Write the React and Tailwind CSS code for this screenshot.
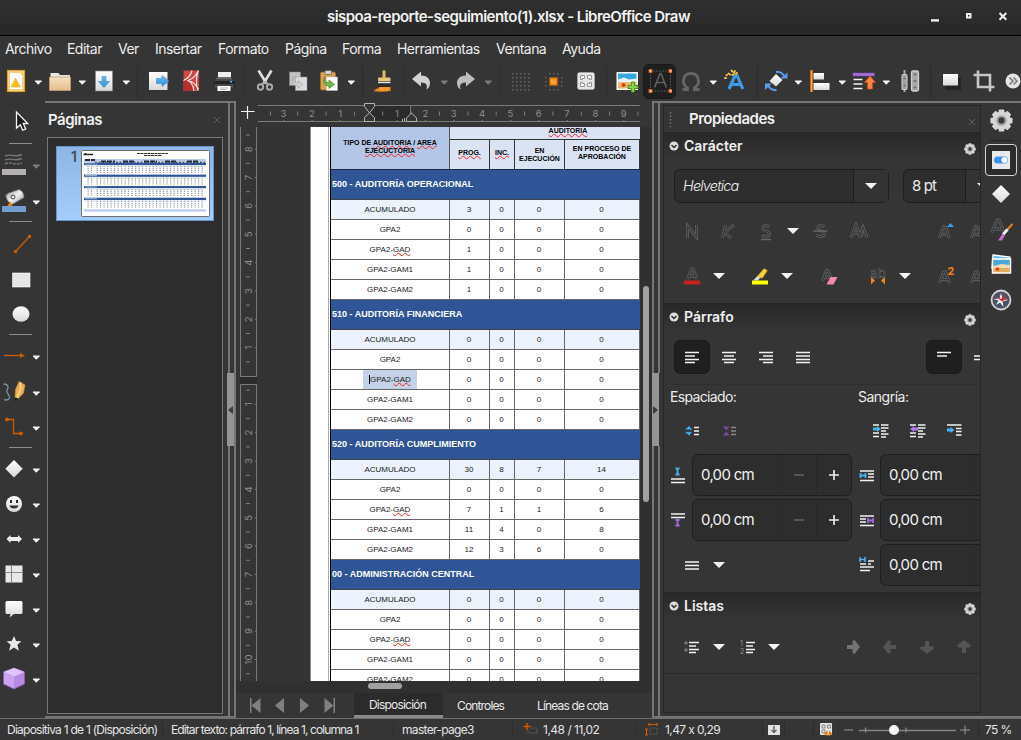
import React from "react";

/* ---------- shared pieces ---------- */

const Svg = ({ children, className = "" }) => (
  <svg width="24" height="24" viewBox="0 0 24 24" fill="none" className={"shrink-0 " + className}>
    {children}
  </svg>
);

const Caret = ({ dim = false, className = "" }) => (
  <svg width="20" height="10" viewBox="0 0 20 10" className={"shrink-0 " + className}>
    <path d="M7 3.5h6.6v.8L10.5 7.4h-.6L7 4.3z" fill={dim ? "#7c7c7c" : "#fafafa"} />
  </svg>
);

const BigCaret = ({ className = "" }) => (
  <svg width="20" height="12" viewBox="0 0 20 12" className={"shrink-0 " + className}>
    <path d="M4 3h12l-6 6z" fill="#f4f4f2" />
  </svg>
);

const Sep = ({ className = "" }) => <div className={"h-8 w-px shrink-0 bg-[#2c2c2c] " + className} />;

const Defs = () => (
  <svg width="0" height="0" className="absolute">
    <defs>
      <linearGradient id="paper" x1="0" y1="0" x2="0" y2="1">
        <stop offset="0" stopColor="#ffffff" />
        <stop offset="1" stopColor="#d8d8d8" />
      </linearGradient>
      <linearGradient id="blue" x1="0" y1="0" x2="0" y2="1">
        <stop offset="0" stopColor="#6fc0f2" />
        <stop offset="1" stopColor="#2a8fdc" />
      </linearGradient>
      <linearGradient id="folder" x1="0" y1="0" x2="0" y2="1">
        <stop offset="0" stopColor="#f6e2c4" />
        <stop offset="1" stopColor="#e3bd8b" />
      </linearGradient>
      <linearGradient id="metal" x1="0" y1="0" x2="1" y2="1">
        <stop offset="0" stopColor="#8f8f93" />
        <stop offset="0.5" stopColor="#f2f2f4" />
        <stop offset="1" stopColor="#8a8a8e" />
      </linearGradient>
    </defs>
  </svg>
);

/* ---------- top ---------- */

const TitleBar = () => (
  <div className="flex h-9 shrink-0 items-center border-b border-black bg-gradient-to-b from-[#303030] to-[#272727]">
    <div className="w-[326px]" />
    <div className="w-[365px] whitespace-nowrap text-center text-[15px] font-semibold tracking-[-0.56px] text-[#f2f2f2]">
      sispoa-reporte-seguimiento(1).xlsx - LibreOffice Draw
    </div>
    <svg width="96" height="24" viewBox="0 0 96 24" className="ml-[230px]">
      <path d="M10 13.2h8v2.400h-8z" fill="#f0f0f0" />
      <path d="M46 8h3.500v3.500h-3.500z" stroke="#f0f0f0" strokeWidth="2" fill="none" />
      <path d="M78.500 7l6.800 6.800M85.300 7L78.500 13.800" stroke="#f0f0f0" strokeWidth="2" />
    </svg>
  </div>
);

const MenuBar = () => (
  <div className="flex h-[26px] shrink-0 items-center whitespace-nowrap border-b border-[#313131] bg-[#353535] pl-[5px] text-[14px] tracking-[-0.55px] text-[#ededed]">
    <div className="w-[62px]">Archivo</div>
    <div className="w-[51px]">Editar</div>
    <div className="w-[37px]">Ver</div>
    <div className="w-[63px]">Insertar</div>
    <div className="w-[67px]">Formato</div>
    <div className="w-[57px]">Página</div>
    <div className="w-[55px]">Forma</div>
    <div className="w-[99px]">Herramientas</div>
    <div className="w-[66px]">Ventana</div>
    <div>Ayuda</div>
  </div>
);

const dots = [];
for (let r = 0; r < 5; r++) for (let c = 0; c < 5; c++) dots.push([c, r]);

const TCaret = ({ dim, className = "" }) => <Caret dim={dim} className={"mt-[2px] " + className} />;

const ToolBar = () => (
  <div className="flex h-[39px] shrink-0 items-center overflow-hidden bg-[#353535] pb-px">
    <Svg className="ml-1">
      <rect x="3.700" y="1.700" width="16.600" height="20.600" fill="#fff" stroke="#dfa32c" strokeWidth="1.600" />
      <rect x="5.500" y="3.500" width="13" height="17" fill="#fff" stroke="#f3cf76" />
      <path d="M11.500 9l5 9H7z" fill="#f8c21c" stroke="#e0a010" strokeWidth=".5" />
      <path d="M14.500 2.500h5v6z" fill="#ffdb6e" />
    </Svg>
    <TCaret className="mr-px" />
    <Svg>
      <path d="M1.500 4h8l1.500 2H21v4H1.500z" fill="#e8e8e8" />
      <rect x="0.500" y="8" width="21" height="13.500" rx=".5" fill="url(#folder)" stroke="#c9a06e" strokeWidth=".8" />
    </Svg>
    <TCaret className="-ml-px" />
    <Svg>
      <rect x="3.500" y="2" width="17" height="20" fill="url(#paper)" stroke="#888" strokeWidth=".6" />
      <path d="M10 7.500h4v5h3.500L12 18.500 6.500 12.500H10z" fill="url(#blue)" stroke="#2e7fbd" strokeWidth=".5" />
    </Svg>
    <TCaret className="mr-px" />
    <Sep />
    <Svg className="ml-[9px]">
      <rect x="2" y="3" width="18.500" height="18" fill="url(#paper)" />
      <path d="M9.500 9.500h5.500V6.500l7 5.500-7 5.500v-3H9.500z" fill="url(#blue)" stroke="#2e7fbd" strokeWidth=".5" />
    </Svg>
    <Svg className="ml-2">
      <rect x="4.500" y="1.500" width="15.500" height="20.500" fill="#cf4540" />
      <path d="M4.500 12L11 12 14 22H4.500z" fill="#b03032" />
      <path d="M13 1.500c-1 4-3.500 8-8.500 10M8 11.500c3.500.5 6 4 7 10.500M19.500 1.500C17 6 15.500 9 9 11.500M19 2.500c-2 6-2 13 0 19M10 12c3 .5 7 4 9.500 8" stroke="#f6e4e2" strokeWidth="1.200" />
    </Svg>
    <Svg className="ml-[9px]">
      <rect x="6" y="3" width="13" height="8" fill="#efefef" />
      <path d="M2 11.500l2.500-3h15.500l2.500 3v8.500H2z" fill="#484848" stroke="#171717" strokeWidth=".6" />
      <path d="M2.500 12h19.500v3H2.500z" fill="#222" />
      <path d="M4.500 9h15" stroke="#8a8a8a" />
      <rect x="18" y="12" width="2" height="1.500" fill="#35c8ff" />
      <rect x="5.500" y="17" width="13" height="5" fill="#fff" />
      <path d="M8 19h8M8 20.500h6" stroke="#aaa" strokeWidth=".8" />
    </Svg>
    <Sep className="ml-2" />
    <Svg className="ml-2">
      <path d="M5.500 1.500l8 13M18.500 1.500l-8 13" stroke="#dedede" strokeWidth="2.600" />
      <circle cx="7.500" cy="18" r="2.700" stroke="#a9a9a9" strokeWidth="1.900" />
      <circle cx="16.500" cy="18" r="2.700" stroke="#a9a9a9" strokeWidth="1.900" />
      <path d="M9 15.500l3-2.500 3 2.500" stroke="#a9a9a9" strokeWidth="1.800" />
    </Svg>
    <Svg className="ml-[9px]">
      <rect x="3.500" y="3" width="11" height="13.500" fill="#c2c2c2" stroke="#888" strokeWidth=".5" />
      <rect x="9.500" y="8" width="11.500" height="13.500" fill="#dcdcdc" stroke="#999" strokeWidth=".5" />
      <path d="M8 7c-2 3 0 7 4 7v-2.500l5 4-5 4V17c-5 0-7.500-5-4-10z" fill="#cfcfcf" stroke="#969696" strokeWidth=".5" />
    </Svg>
    <Svg className="ml-[7px]">
      <rect x="3.500" y="3" width="15" height="18" rx="1.500" fill="#dba24e" stroke="#a36e25" strokeWidth=".7" />
      <rect x="8" y="1.500" width="6.500" height="4" rx="1" fill="#d8d8d8" stroke="#555" strokeWidth=".7" />
      <rect x="9.500" y="8" width="11" height="13.500" fill="#fff" stroke="#bbb" strokeWidth=".5" />
      <path d="M8 7.500c-1 3 0 6 4 6V11l5.500 4.500L12 19.500V17c-5 0-7-5-4-9.500z" fill="#72b848" stroke="#3f8425" strokeWidth=".7" />
    </Svg>
    <TCaret />
    <Sep className="ml-px" />
    <Svg className="ml-2">
      <path d="M11.500 2.500a1.500 1.500 0 0 1 3 0V9h-3z" fill="#e2b86e" stroke="#9a7230" strokeWidth=".5" />
      <rect x="7" y="8.500" width="12.500" height="4" rx="1" fill="#e8c682" />
      <rect x="7" y="12.500" width="12.500" height="5.500" fill="#2c2c2c" />
      <path d="M7 13.500h12.500" stroke="#e8e8e8" strokeWidth="1.400" />
      <path d="M8 18h11.500v4c-6 1-12 .5-17 .5l3-2H2l5-1z" fill="#f08a1c" />
      <path d="M10 18.500v3M13 18.500v3M16 18.500v3" stroke="#ffc266" />
    </Svg>
    <Sep className="ml-2" />
    <Svg className="ml-[5px]">
      <path d="M3 10l9-7.500v4c7 0 9 4.500 9 7.500 0 3-1.500 5.500-3.500 6.500 1-4 .5-7-5.500-7v4z" fill="#d2d2d2" />
    </Svg>
    <TCaret dim className="ml-px" />
    <Svg>
      <path d="M21 10l-9-7.500v4c-7 0-9 4.500-9 7.500 0 3 1.500 5.500 3.500 6.500-1-4-.5-7 5.500-7v4z" fill="#bdbdbd" />
    </Svg>
    <TCaret dim />
    <Sep className="ml-px" />
    <Svg className="ml-2">
      {dots.map(([c, r]) => (
        <rect key={c + "-" + r} x={4 + c * 4} y={4 + r * 4} width="1.500" height="1.500" fill="#666" />
      ))}
    </Svg>
    <Svg className="ml-[9px]">
      {dots.map(([c, r]) =>
        !((c === 0 || c === 4) && (r === 0 || r === 4)) ? (
          <rect key={c + "-" + r} x={4 + c * 4} y={4 + r * 4} width="1.500" height="1.500" fill="#666" />
        ) : null
      )}
      <rect x="7.500" y="7.500" width="9.500" height="9.500" fill="#353535" />
      <rect x="9" y="9" width="7" height="7" fill="#fba033" stroke="#e87000" strokeWidth="1.200" />
    </Svg>
    <Svg className="ml-[9px]">
      <rect x="3.500" y="3.500" width="17" height="17" rx="2" fill="#e6e6e6" stroke="#bbb" strokeWidth=".5" />
      <path d="M6.500 10.500v-4h4v3h-2v1zM17.500 10.500v-4h-4v3h2v1zM6.500 13.500v4h4v-3h-2v-1zM17.500 13.500v4h-4v-3h2v-1z" fill="#fff" stroke="#8a8a8a" strokeWidth=".9" />
    </Svg>
    <Sep className="ml-2" />
    <Svg className="ml-2">
      <rect x="1.500" y="3" width="21.500" height="18" fill="#fff" />
      <rect x="3" y="4.500" width="18.500" height="8" fill="#38a5e0" />
      <path d="M3 10.500l6-2 5 2 7.500-1v4H3z" fill="#e5f5fb" />
      <path d="M3 13h18.500v6.500H3z" fill="#e9b96b" />
      <path d="M8.500 14v4M6.500 16h4" stroke="#db3a12" strokeWidth="2" />
      <path d="M16.500 13h3v3.500H23v3h-3.500V23h-3v-3.500H13v-3h3.500z" fill="#8ad052" stroke="#4a9417" />
    </Svg>
    <div className="ml-1 flex h-[35px] w-[33px] shrink-0 items-center justify-center rounded-md border border-[#191919] bg-[#1f1f1f]">
      <Svg>
        <rect x="2.500" y="2" width="20" height="20" stroke="#5d5d5d" strokeDasharray="1.500 1.500" />
        <path d="M6.500 18.500L12 4.500h1l5.500 14M8.500 13.500h8" stroke="#606060" strokeWidth="1.700" />
        {[[1, 0.5], [21, 0.5], [1, 20.5], [21, 20.5]].map(([x, y]) => (
          <rect key={x + "-" + y} x={x} y={y} width="3" height="3" fill="#f9b48c" stroke="#e0601c" strokeWidth=".8" />
        ))}
      </Svg>
    </div>
    <Svg className="ml-[3px]">
      <path d="M3.500 20.500h5v-1.500C5 16.500 4 14 4.500 11 5 6.500 8 4.500 12 4.500s7 2 7.500 6.500c.5 3-.5 5.500-4 8v1.500h5" stroke="#666" strokeWidth="2.800" />
    </Svg>
    <TCaret />
    <Svg>
      <path d="M6 20L11.800 7h2.500l5.500 13M9 15.500h8" stroke="#3e9ae4" strokeWidth="3.200" />
      <path d="M8.500 1.500l1 1M12 2l-1 2M5.500 4.500l1.500 1M2 9l1 0M9 6l1.500 -.5M3.500 6l.5 0M14 4l-1 1" stroke="#f7c948" strokeWidth="1.800" strokeLinecap="round" />
    </Svg>
    <Sep className="ml-[10px]" />
    <Svg className="ml-1.5">
      <path d="M12 5l6.500 6-6.500 6.500L5.500 12z" fill="url(#paper)" />
      <path d="M12 3c4.500-.5 8 2 8.500 6" stroke="#5a9bea" strokeWidth="2.200" />
      <path d="M16.500 9.500h7V3.500z" fill="#5a9bea" />
      <path d="M12.500 21c-4.500 .5-8-2-8.500-6" stroke="#5a9bea" strokeWidth="2.200" />
      <path d="M8 14.500H1v6.500z" fill="#5a9bea" />
    </Svg>
    <TCaret />
    <Svg>
      <path d="M3.500 1v22" stroke="#ee7a0b" strokeWidth="2.600" />
      <path d="M3.500 2v20" stroke="#f9b266" strokeWidth=".8" />
      <rect x="5.500" y="4" width="10.500" height="6.500" fill="url(#paper)" />
      <rect x="5.500" y="14" width="16" height="7" fill="url(#paper)" />
    </Svg>
    <TCaret />
    <Svg>
      <rect x="1" y="4" width="21.500" height="3" fill="#a774dc" stroke="#7b42b8" strokeWidth=".6" />
      <path d="M1.500 10.500h9M1.500 15h9M1.500 19.500h9" stroke="#f2f2f2" strokeWidth="1.500" />
      <path d="M15.500 20v-6.500h-3L18 7l5.500 6.500h-3V20z" fill="#fb8440" stroke="#d4500e" strokeWidth=".7" />
    </Svg>
    <TCaret />
    <Svg className="ml-0.5">
      <path d="M6.500 1v22" stroke="#a8a8a8" strokeWidth="2" />
      <rect x="4" y="5.500" width="5" height="15" rx="1" fill="#a0a0a0" stroke="#c8c8c8" strokeWidth="1.100" />
      <rect x="13.500" y="2" width="7" height="20" rx="1.500" fill="#a8a8a8" stroke="#cecece" strokeWidth="1.300" />
      <path d="M5.500 9.500h2M5.500 16.500h2M15.500 5.500h3M15.500 12h3M15.500 18.500h3" stroke="#666" strokeWidth="1.500" />
    </Svg>
    <Sep className="ml-2" />
    <Svg className="ml-2">
      <rect x="6" y="8.500" width="16" height="12.500" fill="#242424" />
      <rect x="4" y="5" width="15" height="11.500" fill="url(#paper)" />
    </Svg>
    <Svg className="ml-[9px]">
      <path d="M6 1.500V18h16.500M1.500 6H18v16.500" stroke="#c6c6c6" strokeWidth="2.600" />
    </Svg>
    <Svg className="ml-[5px]">
      <circle cx="12" cy="12" r="7.500" fill="#e4e4e4" />
      <path d="M8.500 8.500l3.500 3.500-3.500 3.500M12.500 8.500l3.500 3.500-3.500 3.500" stroke="#777" strokeWidth="1.500" />
    </Svg>
  </div>
);

/* ---------- left tools ---------- */

const Tool = ({ h, caret, dim, children }) => (
  <div className={"flex shrink-0 items-center " + h + (caret ? " pl-[2px]" : " pl-[9px]")}>
    {children}
    {caret && <Caret dim={dim} className="mt-[2px]" />}
  </div>
);
const ToolSep = () => <div className="my-[3px] ml-[9px] h-px w-[23px] shrink-0 bg-[#8c8c8c]" />;

const LeftTools = () => (
  <div className="flex w-[45px] shrink-0 flex-col">
    <Tool h="h-[39px]">
      <Svg><path d="M7.500 3v16l3.800-3.300 2.400 5.500 3-1.200-2.400-5.500h4.500z" fill="#1c1c1c" stroke="#f6f6f6" strokeWidth="1.300" /></Svg>
    </Tool>
    <ToolSep />
    <Tool h="h-9" caret dim>
      <Svg>
        <path d="M3 3c6-3 9 2 17-1.500M3 7c6-3 9 2 17-1.500" stroke="#787878" strokeWidth="1.400" />
        <path d="M3 11c6-3 9 2 17-1" stroke="#787878" strokeWidth="1.400" strokeDasharray="3 1" />
        <rect x="0" y="16" width="24" height="6" fill="#b5b1b2" />
      </Svg>
    </Tool>
    <Tool h="h-[35px]" caret>
      <Svg>
        <path d="M4 5L17 .5c3 1 5 4 5 8L10 15.500c-4-2-6.500-6.500-6-10.500z" fill="url(#metal)" stroke="#777" strokeWidth=".7" />
        <path d="M9 2C5 0 3.500 2 5 6" stroke="#2b2b2b" />
        <circle cx="11" cy="8" r="2" stroke="#444" />
        <path d="M8 12l2.500 5h-5z" fill="#ef7b12" />
        <rect x="0" y="17" width="24" height="6" fill="#729fcf" />
      </Svg>
    </Tool>
    <ToolSep />
    <Tool h="h-[37px]">
      <Svg>
        <path d="M6.500 19.500L20.500 4.500" stroke="#ce5c00" strokeWidth="1.300" />
        <path d="M5 18h3v3H5zM19 3h3v3h-3z" fill="#ce5c00" />
      </Svg>
    </Tool>
    <Tool h="h-[35px]"><Svg><rect x="3.500" y="5" width="17.500" height="14" fill="#e6e6e4" stroke="#fff" strokeWidth=".6" /></Svg></Tool>
    <Tool h="h-[34px]"><Svg><ellipse cx="12" cy="12" rx="8.500" ry="7.700" fill="url(#paper)" /></Svg></Tool>
    <ToolSep />
    <Tool h="h-9" caret>
      <Svg><path d="M2 11.500h17" stroke="#ce5c00" strokeWidth="1.300" /><path d="M18 9l5 2.500-5 2.500z" fill="#ce5c00" /></Svg>
    </Tool>
    <Tool h="h-[35px]" caret>
      <Svg>
        <path d="M1.500 4c5 0 5.500 4 3.500 6s3.500 5 2.500 8c-1 2-4 2.500-5.500 1.500" stroke="#7f92a5" strokeWidth="1.300" />
        <path d="M17 1.500l6 3.500-1.500 8-5.500 6-3-1.500 .5-8z" fill="#f5ad4d" stroke="#d88a28" strokeWidth=".6" />
        <path d="M18.500 2.500l0 7-3.500 8" stroke="#ffd795" strokeWidth="1.800" />
        <path d="M13 17.500l-.5 4 4-3z" fill="#222" />
      </Svg>
    </Tool>
    <Tool h="h-[35px]" caret>
      <Svg>
        <path d="M5 4.500h6.500V18.500H19" stroke="#ce5c00" strokeWidth="1.300" />
        <circle cx="5" cy="4.500" r="2" fill="#ce5c00" /><circle cx="19" cy="18.500" r="2" fill="#ce5c00" />
      </Svg>
    </Tool>
    <ToolSep />
    <Tool h="h-[35px]" caret><Svg><path d="M12 3l8.700 8.700-8.700 8.700-8.700-8.700z" fill="url(#paper)" /></Svg></Tool>
    <Tool h="h-[35px]" caret>
      <Svg>
        <circle cx="12" cy="12" r="8" fill="url(#paper)" />
        <rect x="8" y="8" width="2" height="3" fill="#333" /><rect x="14" y="8" width="2" height="3" fill="#333" />
        <path d="M7.500 13.500h9c-.5 4-8.500 4-9 0z" fill="#333" />
      </Svg>
    </Tool>
    <Tool h="h-[35px]" caret><Svg><path d="M4.500 12l4-4v2h7.500V8l4 4-4 4v-2h-7.500v2z" fill="#f0f0f0" /></Svg></Tool>
    <Tool h="h-[35px]" caret>
      <Svg><rect x="3.500" y="3.500" width="17" height="17" fill="#e9e9e7" /><path d="M9.500 3.500v17M3.500 10.500h17" stroke="#888" strokeWidth="1.100" /></Svg>
    </Tool>
    <Tool h="h-[35px]" caret><Svg><path d="M5 4h14q1.500 0 1.500 1.500v10Q20.500 17 19 17h-7l-4.500 3.500 1-3.500H5q-1.500 0-1.500-1.500v-10Q3.500 4 5 4z" fill="url(#paper)" /></Svg></Tool>
    <Tool h="h-[35px]" caret><Svg><path d="M12 4l2.200 5 5.200.3-4 3.500 1.500 6L12 15.500 7.100 18.800l1.500-6-4-3.500 5.200-.3z" fill="#e8e8e8" /></Svg></Tool>
    <Tool h="h-[35px]" caret>
      <Svg>
        <path d="M12 1l10.500 4v12L12 22 1.500 17V5z" fill="#b98ae4" stroke="#8c5bb5" />
        <path d="M1.500 5L12 1l10.500 4L12 9.500z" fill="#dfc5f7" />
        <path d="M2 5.500l10 4v12L2 16.500z" fill="#c9a2f0" />
      </Svg>
    </Tool>
  </div>
);

/* ---------- page thumbnails ---------- */

const Thumb = () => (
  <svg width="129" height="67" viewBox="0 0 129 67" className="shrink-0">
    <rect x=".5" y=".5" width="128" height="66" rx="1" fill="#fff" stroke="#6d6d6d" />
    <path d="M2.500 4.500h2v-1.500M5 4.500h7" stroke="#222" strokeWidth="1.500" fill="none" />
    <path d="M56 3.500h31M63 5.500h18" stroke="#333" strokeWidth="1" strokeDasharray="3 .5" />
    <rect x="3" y="9" width="122" height="4" fill="#b9cbea" />
    <path d="M4 10h10M20 11.500h14M42 11.500h12M63 11.500h13M84 11.500h12M106 11.500h12" stroke="#252b36" strokeWidth="2" strokeDasharray="5 1" />
    <path d="M14 12.300h110" stroke="#30353f" strokeWidth="1" strokeDasharray="2 1.500" />
    {[14, 25.6, 37, 48.7].map((y) => (
      <g key={y}>
        <rect x="3" y={y - 1} width="122" height="2.300" fill="#2f5597" />
        <path d={"M4 " + y + "h12"} stroke="#b8cbe8" strokeWidth=".8" />
        <rect x="3" y={y + 1.3} width="122" height="1.500" fill="#e5edf9" />
        {[2.7, 4.600, 6.500, 8.400].map((d) => (
          <path key={d} d={"M6.500 " + (y + d) + "h5M15.500 " + (y + d) + "h107"} stroke="#8f949c" strokeWidth="1" strokeDasharray="1.200 2.300" />
        ))}
      </g>
    ))}
    <rect x="3" y="59.500" width="122" height="2" fill="#b4c6e7" />
  </svg>
);

const Splitter = ({ arrow, side }) => (
  <div className="flex w-[9px] shrink-0 flex-col">
    <div className={"h-[270px] border-x-2 border-[#757575] " + (side === "left" ? "ml-px" : "mr-px")} />
    <div className={"flex h-[73px] " + (side === "left" ? "border-r-2 border-[#757575]" : "")}>
      <div className="flex w-[7px] items-center justify-center bg-[#949492]">
        <svg width="5" height="8" viewBox="0 0 5 8"><path d={arrow} fill="#3a3a3a" /></svg>
      </div>
    </div>
    <div className={"flex-1 border-x-2 border-[#757575] " + (side === "left" ? "ml-px" : "mr-px")} />
  </div>
);

const PagesPanel = () => (
  <div className="flex w-[191px] shrink-0 flex-col border-y-2 border-[#757575]">
    <div className="flex min-h-0 flex-1">
      <div className="flex w-[182px] shrink-0 flex-col pl-0.5 pr-[4px]">
        <div className="flex h-[34px] shrink-0 items-center justify-between pl-px pr-[2px]">
          <span className="text-[15px] font-semibold tracking-[-0.5px] text-[#efefef]">Páginas</span>
          <svg width="8" height="8" viewBox="0 0 8 8"><path d="M1 1l6 6M7 1L1 7" stroke="#606060" /></svg>
        </div>
        <div className="mb-0.5 flex-1 border border-[#777] bg-[#2d2d2d] pl-2 pt-2">
          <div className="flex h-[75px] w-[158px] border border-[#6295d2] bg-gradient-to-b from-[#8db6e5] to-[#a4cdfb]">
            <div className="w-[24px] pr-[4px] text-right text-[14px] leading-5 font-semibold text-[#454c55]">1</div>
            <div className="pt-[3px]"><Thumb /></div>
          </div>
        </div>
      </div>
      <Splitter side="left" arrow="M5 0v8L0 4z" />
    </div>
  </div>
);

/* ---------- rulers ---------- */

const HRuler = () => {
  const z = 111.3;
  const marks = [];
  for (let i = -3; i <= 9; i++) marks.push(i);
  return (
    <svg width="382" height="26" viewBox="0 0 382 26" className="shrink-0">
      <rect x="111" y="5" width="41" height="16" fill="#2b2b2b" />
      <path d="M0 4.500H106M117 4.500H382M0 20.500H382M152.500 5v10" stroke="#7a7a7a" />
      {marks.map((i) => (
        <g key={i}>
          {i !== 0 && (
            <text x={z + i * 28.35 - 0.7} y="15.500" textAnchor="middle" fontSize="9.500" fill="#8f8f8f">{Math.abs(i)}</text>
          )}
          <path d={`M${(z + i * 28.35 - 0.5).toFixed(1)} 19v2M${(z + i * 28.35 + 13.5).toFixed(1)} 10.500v4`} stroke="#808080" />
        </g>
      ))}
      <path d="M12.500 10.500v4" stroke="#808080" />
      <path d="M106.500 2.500h10v3l-5 6.500-5-6.500zM106.500 20.500v-4l5-4.500 5 4.500v4z" fill="#353535" stroke="#b5b5b5" />
      <path d="M148.500 20.500v-3.500l5-5 5 5v3.500zM144.500 18v2.500M146.500 17v3.500" fill="#353535" stroke="#b5b5b5" />
    </svg>
  );
};

const VRuler = () => {
  const marks = [];
  for (let i = -8; i <= 10; i++) if (i !== 0) marks.push(i);
  const half = [];
  for (let i = -9; i <= 10; i++) half.push(i);
  const z = 249;
  return (
    <svg width="22" height="554" viewBox="0 0 22 554" className="shrink-0">
      <path d="M4.500 0V249.500H20.500V0M4.500 554V257.500H20.500V554" stroke="#7a7a7a" fill="none" />
      <rect x="4" y="250" width="17" height="7" fill="#2b2b2b" />
      {marks.map((i) => (
        <g key={i}>
          <text
            transform={`translate(15.5 ${z + i * 28.35}) rotate(-90)`}
            textAnchor="middle" fontSize="9.500" fill="#8f8f8f"
          >{Math.abs(i)}</text>
          <path d={`M19 ${(z + i * 28.35).toFixed(1)}h2`} stroke="#808080" />
        </g>
      ))}
      {half.map((i) => (
        <path key={i} d={`M10 ${(z + i * 28.35 + 14.2).toFixed(1)}h4`} stroke="#808080" />
      ))}
    </svg>
  );
};

/* ---------- document ---------- */

const sections = [
  { title: "500 - AUDITORÍA OPERACIONAL", rows: [[3, 0, 0, 0], [0, 0, 0, 0], [1, 0, 0, 0], [1, 0, 0, 0], [1, 0, 0, 0]] },
  { title: "510 - AUDITORÍA FINANCIERA", rows: [[0, 0, 0, 0], [0, 0, 0, 0], [0, 0, 0, 0], [0, 0, 0, 0], [0, 0, 0, 0]], selected: 2 },
  { title: "520 - AUDITORÍA CUMPLIMIENTO", rows: [[30, 8, 7, 14], [0, 0, 0, 0], [7, 1, 1, 6], [11, 4, 0, 8], [12, 3, 6, 0]] },
  { title: "00 - ADMINISTRACIÓN CENTRAL", rows: [[0, 0, 0, 0], [0, 0, 0, 0], [0, 0, 0, 0], [0, 0, 0, 0], [0, 0, 0, 0]] },
];
const names = ["ACUMULADO", "GPA2", "GPA2-GAD", "GPA2-GAM1", "GPA2-GAM2"];
const wavy = "underline decoration-wavy decoration-[#ff2020] decoration-[1px] underline-offset-[0px] [text-decoration-skip-ink:none]";
const cols = "grid grid-cols-[119px_40px_25px_50px_75px]";

const Name = ({ text }) =>
  text === "GPA2-GAD" ? <span>GPA2-<span className={wavy}>GAD</span></span> : <span>{text}</span>;

const DocTable = () => (
  <div className="w-[310px] shrink-0 border-l border-black [font-family:'Liberation_Sans',Arial,sans-serif] text-[8px] text-[#1a1a1a]">
    <div className="grid h-[43px] grid-cols-[119px_190px] border-b border-[#1c2c4c] text-[7px] font-bold leading-[8px] text-black">
      <div className="flex items-center justify-center border-r border-[#555] bg-[#b4c6e7] pb-[3px] text-center">
        <div className="whitespace-nowrap">TIPO DE <span className={wavy}>AUDITORIA</span> / <span className={wavy}>AREA</span><br /><span className={wavy}>EJECUCTORIA</span></div>
      </div>
      <div className="flex flex-col bg-[#dae3f3]">
        <div className="h-[13px] border-b border-[#333] pl-[46px] text-center"><span className={wavy}>AUDITORIA</span></div>
        <div className="grid flex-1 grid-cols-[40px_25px_50px_75px] text-center">
          <div className="flex items-center justify-center border-r border-[#333] pb-[3px]"><span className={wavy}>PROG.</span></div>
          <div className="flex items-center justify-center border-r border-[#333] pb-[3px]"><span className={wavy}>INC.</span></div>
          <div className="flex items-center justify-center border-r border-[#333]">EN<br />EJECUCIÓN</div>
          <div className="flex items-center justify-center border-r border-[#333] pb-[4px]">EN PROCESO DE<br />APROBACIÓN</div>
        </div>
      </div>
    </div>
    {sections.map((s) => (
      <div key={s.title}>
        <div className="flex h-[30px] items-center border-b border-[#444] bg-[#2f5597] pl-[1px] text-[9px] font-bold text-white">{s.title}</div>
        {s.rows.map((r, i) => (
          <div key={i} className={cols + " h-5 " + (i === 0 ? "bg-[#ecf2fe]" : "bg-white")}>
            <div className="flex items-center justify-center border-b border-r border-[#666]">
              {s.selected === i ? (
                <div className="flex h-[19px] w-[54px] items-center justify-center bg-[#c3d2e6]"><span className="h-[9px] w-px bg-black" /><Name text={names[i]} /></div>
              ) : <Name text={names[i]} />}
            </div>
            {r.map((v, j) => (
              <div key={j} className="flex items-center justify-center border-b border-r border-[#666] pr-px">{v}</div>
            ))}
          </div>
        ))}
      </div>
    ))}
  </div>
);

const DocArea = () => (
  <div className="flex w-[416px] shrink-0 flex-col bg-[#353535]">
    <div className="flex h-[26px] shrink-0">
      <svg width="22" height="26" viewBox="0 0 22 26" className="shrink-0">
        <path d="M5 10.500h13.500M11.500 5v13" stroke="#f2f2f2" strokeWidth="1.200" />
      </svg>
      <HRuler />
    </div>
    <div className="flex h-[554px] shrink-0">
      <VRuler />
      <div className="flex w-[382px] shrink-0 overflow-hidden bg-[#343434] pl-[52px]">
        <div className="w-[18px] shrink-0 border-l border-[#888] bg-white" />
        <div className="w-[2px] shrink-0 border-l border-[#aaa] bg-white" />
        <DocTable />
      </div>
      <div className="flex w-3 shrink-0 flex-col items-center bg-[#303030] pt-[159px]">
        <div className="h-[216px] w-1.5 rounded-sm bg-[#a0a09e]" />
      </div>
    </div>
    <div className="flex h-3 shrink-0 bg-[#303030] pl-[132px] pt-[2px]">
      <div className="h-1.5 w-[34px] rounded-sm bg-[#a0a09e]" />
    </div>
    <div className="flex h-[25px] shrink-0 whitespace-nowrap text-[12px] tracking-[-0.45px] text-[#e8e8e8]">
      <svg width="118" height="25" viewBox="0 0 118 25" className="shrink-0">
        <path d="M14 5h1.500v15H14zM24.500 5v15l-9-7.500zM48 5v15l-9-7.500zM64 5v15l9-7.500zM88.500 5v15l9-7.500zM97.500 5h1.500v15h-1.500z" fill="#808080" />
      </svg>
      <div className="flex w-[89px] items-center pl-[15px] border-b-[3px] border-[#8a8a8a] bg-[#2b2b2b] pt-[2px] tracking-[-0.8px]">Disposición</div>
      <div className="flex w-[80px] items-center pl-[14px] tracking-[-0.85px]">Controles</div>
      <div className="flex items-center pl-[14px] tracking-[-0.85px]">Líneas de cota</div>
    </div>
  </div>
);

/* ---------- properties sidebar ---------- */

const Gear = ({ size = 12 }) => (
  <svg width={size} height={size} viewBox="0 0 24 24" className="shrink-0">
    {[0, 45, 90, 135].map((a) => (
      <rect key={a} x="9" y="0.500" width="6" height="23" rx="1" fill="#d6d6d6" transform={`rotate(${a} 12 12)`} />
    ))}
    <circle cx="12" cy="12" r="9.500" fill="#d6d6d6" />
    <circle cx="12" cy="12" r="5.500" fill="#a4a4a4" />
    <circle cx="12" cy="12" r="3.300" fill="#3a3a3a" />
  </svg>
);

const Section = ({ title }) => (
  <div className="flex h-[28px] shrink-0 items-center border-t border-[#262626] bg-gradient-to-b from-[#282828] to-[#353535] pb-[2px] pl-[5px] pr-[4px]">
    <svg width="10" height="10" viewBox="0 0 10 10">
      <circle cx="5" cy="5" r="4.500" fill="#dedede" /><path d="M2.500 4L5 6.500 7.500 4" stroke="#2b2b2b" strokeWidth="1.500" fill="none" />
    </svg>
    <span className="ml-[5px] flex-1 text-[14px] font-semibold text-[#f0f0f0]">{title}</span>
    <div className="mt-[7px]"><Gear /></div>
  </div>
);

const Lines = ({ d, className = "", children }) => (
  <Svg className={className}><path d={d} stroke="#f2f2f2" strokeWidth="1.300" />{children}</Svg>
);

/* embossed letter: dark body with a faint light rim */
const Emboss = ({ d, className = "", children }) => (
  <Svg className={className}>
    <path d={d} stroke="#686868" strokeWidth="2.800" />
    <path d={d} stroke="#3a3a3a" strokeWidth="1.500" />
    {children}
  </Svg>
);

const Spin = () => (
  <div className="flex h-[42px] w-[160px] shrink-0 items-stretch rounded-md border border-[#1e1e1e] bg-[#2d2d2d] text-[15px] tracking-[-0.7px] text-[#f2f2f2]">
    <div className="flex w-[88px] items-center whitespace-nowrap pl-2">0,00 cm</div>
    <div className="flex w-[35px] items-center justify-center border-l border-[#292929]"><div className="h-[1.5px] w-2.5 bg-[#555]" /></div>
    <div className="flex flex-1 items-center justify-center border-l border-[#292929]">
      <svg width="12" height="12" viewBox="0 0 12 12"><path d="M1 6h10M6 1v10" stroke="#f0f0f0" strokeWidth="1.600" /></svg>
    </div>
  </div>
);

const ArrowIcon = ({ rot, bright, className }) => (
  <Svg className={className}>
    <path transform={`rotate(${rot} 12 12)`} d="M6 10h5.500V6l2-1 5.500 7-5.500 7-2-1v-4H6z" fill={bright ? "#747474" : "#555"} />
  </Svg>
);

const Sidebar = () => (
  <div className="flex w-[318px] shrink-0 flex-col overflow-hidden border border-[#262626] mt-[2px] mb-[3px] bg-[#353535]">
    <div className="flex h-[26px] shrink-0 items-center pl-[5px] pr-[4px]">
      <svg width="3" height="16" viewBox="0 0 3 16"><path d="M1.500 1v15" stroke="#777" strokeWidth="1.500" strokeDasharray="1.500 2" /></svg>
      <span className="ml-[17px] flex-1 text-[15px] font-semibold tracking-[-0.5px] text-[#f0f0f0]">Propiedades</span>
      <svg width="8" height="8" viewBox="0 0 8 8" className="mt-1.5"><path d="M1 1l6 6M7 1L1 7" stroke="#606060" /></svg>
    </div>
    <Section title="Carácter" />
    <div className="mt-[9px] flex shrink-0 pl-[10px] text-[15px] tracking-[-0.6px] text-[#ededed]">
      <div className="flex h-[34px] w-[215px] shrink-0 rounded-md border border-[#1e1e1e] bg-[#2d2d2d]">
        <div className="flex flex-1 items-center pl-2 text-[14.5px] font-light italic tracking-[-0.85px]">Helvetica</div>
        <div className="flex w-[35px] items-center justify-center border-l border-[#1e1e1e] bg-[#333]"><BigCaret /></div>
      </div>
      <div className="ml-[14px] flex h-[34px] w-[98px] shrink-0 rounded-md border border-[#1e1e1e] bg-[#2d2d2d]">
        <div className="flex w-[61px] items-center pl-2 tracking-[-0.9px]">8 pt</div>
        <div className="flex flex-1 items-center border-l border-[#1e1e1e] bg-[#333] pl-[7px]"><BigCaret /></div>
      </div>
    </div>
    <div className="mt-2.5 flex h-9 shrink-0 items-center pl-4">
      <Emboss d="M7.500 19V7L16.500 18V6" />
      <Emboss className="ml-3" d="M9.500 6L6.500 19M18 6L8.500 13.500L15 19" />
      <Emboss className="ml-3.5" d="M15.500 8C13 5.500 8.500 6.500 9 9.500s7 2 6.500 5.500c-.5 3-5.500 3-7.500 1"><path d="M7 20.500h10" stroke="#686868" strokeWidth="1.500" /></Emboss>
      <BigCaret className="ml-[5px]" />
      <Emboss className="ml-[5px]" d="M16.500 8C14 5.500 9.500 6.500 10 9.500s7 2 6.500 5.500c-.5 3-6 3-8 1"><path d="M5.500 12h14" stroke="#686868" strokeWidth="1.500" /></Emboss>
      <Emboss className="ml-3.5" d="M13 18.500L17 8l4 10.500M14 15h5M5 18.500L10 6l5 12.500M7 14h6" />
      <Emboss className="ml-16" d="M5.500 19l4-11h2l4 11M7 15.500h7"><path d="M13 8l3.500-4L20 8z" fill="#3d9be9" /></Emboss>
      <Emboss className="ml-2" d="M5.500 19l4-11h2l4 11M7 15.500h7" />
    </div>
    <div className="mt-[9px] flex h-9 shrink-0 items-center pl-4">
      <Emboss d="M7.500 15l4-10h1.500l4 10M9 12h6.500"><rect x="4" y="16.500" width="16" height="4" fill="#c9211e" /></Emboss>
      <BigCaret className="ml-[5px]" />
      <Svg className="ml-[19px]">
        <path d="M9.500 12l6.500-7.500 3.500 2L14.500 14h-4z" fill="#f2d33f" stroke="#a8851a" strokeWidth=".6" /><path d="M9.500 12l-4.500 4.500h5l2-2.500z" fill="#ddd" /><rect x="4" y="16.500" width="16" height="4" fill="#ffff00" />
      </Svg>
      <BigCaret className="ml-[5px]" />
      <Emboss className="ml-5" d="M5.500 17l4-10.500h1.500l3 7.500M7 13.500h6"><path d="M13.500 13h7l-4 7.500H9.500z" fill="#f487b0" /></Emboss>
      <Svg className="ml-[25px]">
        <text x="4" y="14" fontSize="13" fill="#2c2c2c" stroke="#6a6a6a" strokeWidth=".5" letterSpacing="0.5">ab</text>
        <path d="M5 13l4 3.500-4 4zM19 13l-4 3.500 4 4z" fill="#f58220" />
      </Svg>
      <BigCaret className="ml-[5px]" />
      <Emboss className="ml-[19px]" d="M5.500 19l4-11h2l4 11M7 15.500h7">
        <text x="13.500" y="11" fontSize="10.500" fontWeight="800" fill="#f07c16">2</text>
      </Emboss>
      <Emboss className="ml-2" d="M5.500 19l4-11h2l4 11M7 15.500h7" />
    </div>
    <div className="h-[9px] shrink-0" />
    <Section title="Párrafo" />
    <div className="mt-[9px] flex h-[34px] shrink-0 items-center pl-[10px]">
      <div className="flex h-[34px] w-9 shrink-0 items-center justify-center rounded-md border border-[#1a1a1a] bg-[#1f1f1f]">
        <Lines d="M5 7.500h14M5 11h10M5 14.500h14M5 17.500h10" />
      </div>
      <Lines className="ml-[7px]" d="M5 7.500h14M7 11h10M5 14.500h14M7 17.500h10" />
      <Lines className="ml-[13px]" d="M5 7.500h14M9 11h10M5 14.500h14M9 17.500h10" />
      <Lines className="ml-[13px]" d="M5 7.500h14M5 11h14M5 14.500h14M5 17.500h14" />
      <div className="ml-[111px] flex h-[34px] w-9 shrink-0 items-center justify-center rounded-md border border-[#1a1a1a] bg-[#1f1f1f]">
        <Lines d="M5 7.500h14M5 11h10" />
      </div>
      <Lines className="ml-[7px]" d="M5 11h14M5 14.500h10" />
    </div>
    <div className="ml-[9px] mt-[10px] h-px shrink-0 bg-[#2f2f2f]" />
    <div className="flex h-[26px] shrink-0 items-center pb-[3px] pl-[6px] text-[14px] text-[#ececec]">
      <span className="w-[188px] tracking-[-0.65px]">Espaciado:</span><span className="tracking-[-0.5px]">Sangría:</span>
    </div>
    <div className="mt-2 flex h-[24px] shrink-0 items-center pl-4">
      <Lines d="M14 8.500h5M14 12h5M14 15.500h5"><path d="M5.500 10.500h6.500L9 7zM5.500 13h6.500L9 16.500z" fill="#4ab2f0" stroke="#2b7fb8" strokeWidth=".5" /></Lines>
      <Svg className="ml-[13px]"><path d="M14 8.500h5M14 12h5M14 15.500h5" stroke="#888" strokeWidth="1.300" /><path d="M6 7.500h6.500L9.300 11.500zM6 16.500h6.500L9.300 12.500z" fill="#7a4ba0" /></Svg>
      <Lines className="ml-[128px]" d="M4 6h6M4 14h6M4 17.500h6M12 6h7.500M12 9h7.500M12 12h5M12 15h7.500M12 18h5"><path d="M4 8.500h4V7l4 3-4 3v-1.500H4z" fill="#4ab2f0" /></Lines>
      <Lines className="ml-[13px]" d="M4 6h6M4 14h6M4 17.500h6M12 6h7.500M12 9h7.500M12 12h5M12 15h7.500M12 18h5"><path d="M12 8.500H8V7l-4 3 4 3v-1.500h4z" fill="#b07ae6" /></Lines>
      <Lines className="ml-[12px]" d="M5 6h14.500M14 9.500h5.500M14 12.500h5.500M14 16h5.500"><path d="M5 9.500h3.500V8l4 3-4 3v-1.500H5z" fill="#4ab2f0" /></Lines>
    </div>
    <div className="mt-[11px] flex shrink-0 items-center pl-0.5">
      <Lines d="M5 16h14M5 19.500h14"><path d="M9.500 5.500h4M9.500 11.500h4M11.500 6v6" stroke="#4ab2f0" strokeWidth="1.800" /></Lines>
      <div className="ml-0.5"><Spin /></div>
      <Lines className="ml-[3px]" d="M5 8h14M13 11h6M13 14h6M5 17.500h14"><path d="M5.500 10v5M10.500 10v5M5 12.500h5.500" stroke="#4ab2f0" strokeWidth="1.800" /></Lines>
      <div className="ml-px"><Spin /></div>
    </div>
    <div className="mt-[3px] flex shrink-0 items-center pl-0.5">
      <Lines d="M5 6h14M5 9.500h14"><path d="M9.500 12h4M9.500 17.500h4M11.500 12v6" stroke="#a468e0" strokeWidth="1.800" /></Lines>
      <div className="ml-0.5"><Spin /></div>
      <Lines className="ml-[3px]" d="M5 8h14M5 11h6M5 14h6M5 17.500h14"><path d="M13 10v5M18 10v5M13 12.500h5" stroke="#a468e0" strokeWidth="1.800" /></Lines>
      <div className="ml-px"><Spin /></div>
    </div>
    <div className="mt-[3px] flex shrink-0 items-center pl-4">
      <Lines d="M5 9h14M5 12.500h14M5 16h14" />
      <BigCaret className="ml-[5px]" />
      <Lines className="ml-[126px]" d="M13 8h6M5 11h6M5 14h14M5 17.500h10M13 11h3"><path d="M5 4v5M10 4v5M5 6.500h5" stroke="#4ab2f0" strokeWidth="1.600" /></Lines>
      <div className="ml-px"><Spin /></div>
    </div>
    <div className="h-[6px] shrink-0" />
    <Section title="Listas" />
    <div className="mt-2 flex h-[38px] shrink-0 items-center pl-4">
      <Lines d="M9 7.500h10M9 11h7M9 14.500h10M9 17.500h7"><path d="M5 7h2v2H5zM5 14h2v2H5z" stroke="#8a8a8a" /></Lines>
      <BigCaret className="ml-[5px]" />
      <Lines className="ml-[7px]" d="M10 7.500h9M10 11h7M10 14.500h9M10 17.500h7"><text x="4" y="11" fontSize="7" fill="#999">1</text><text x="4" y="18.500" fontSize="7" fill="#999">2</text></Lines>
      <BigCaret className="ml-[4px]" />
      <ArrowIcon rot={0} bright className="ml-[57px]" />
      <ArrowIcon rot={180} className="ml-[13px]" />
      <ArrowIcon rot={90} className="ml-[13px]" />
      <ArrowIcon rot={270} className="ml-[13px]" />
    </div>
    <div className="mt-[7px] h-px shrink-0 bg-[#282828]" />
  </div>
);

const DeckTabs = () => (
  <div className="flex flex-1 flex-col items-center pt-[6px]">
    <Gear size={23} />
    <div className="mt-[8px] h-px w-[22px] bg-[#222]" />
    <div className="mt-[3px] flex h-8 w-8 items-center justify-center rounded border border-[#d4d4d4] bg-[#2c2c2c]">
      <Svg>
        <rect x="3" y="3" width="18" height="18" fill="#eaeaea" />
        <rect x="5" y="8.500" width="14" height="7" rx="3.500" fill="#3d94e6" /><circle cx="15.500" cy="12" r="3" fill="#fff" />
      </Svg>
    </div>
    <Svg className="mt-[6px]"><path d="M12 3l9 9-9 9-9-9z" fill="url(#paper)" /></Svg>
    <Emboss className="mt-3" d="M2.500 15L8 2h2L15.500 15M4.500 11h8.500">
      <path d="M23.500 6l-6 6.500" stroke="#e28320" strokeWidth="2.200" /><path d="M18.500 11.500l-4.500 5" stroke="#f0f0f0" strokeWidth="2.800" /><path d="M13.500 15.500L9 22.500h4l3-5z" fill="#c86ccc" />
    </Emboss>
    <Svg className="mt-[11px]">
      <path d="M4 2l17 2v4L3 15z" fill="#64bde8" stroke="#fff" strokeWidth="1.300" />
      <rect x="3.500" y="6" width="18" height="14" fill="#e3ad5c" stroke="#fff" strokeWidth="1.500" />
      <rect x="4.500" y="7" width="16" height="6" fill="#45abdf" /><path d="M4.500 13l8-2 8 1v3h-16z" fill="#f3dcae" /><circle cx="8.500" cy="16" r="1.700" fill="#d8401c" />
    </Svg>
    <Svg className="mt-[11px]">
      <circle cx="12" cy="12" r="9.500" fill="#4a5365" stroke="#d0d0d0" strokeWidth="1.800" />
      <path d="M12 5l1.500 5.500 5.500 1.500-5.500 1.500L14.500 19 11 14.500 7 17l2.500-4.500L4.500 11l6-.5z" fill="#f2f2f2" />
      <path d="M6 8l6 3 4-6-1.500 6 4.500-1-6 3.500z" fill="#da2c2c" />
    </Svg>
  </div>
);

/* ---------- status ---------- */

const SSep = ({ className = "" }) => <div className={"h-4 w-px shrink-0 bg-[#2c2c2c] " + className} />;

const StatusBar = () => (
  <div className="flex h-[22px] shrink-0 items-center overflow-hidden whitespace-nowrap border-t border-[#707070] bg-[#353535] pl-[7px] text-[12px] text-[#e4e4e4]">
    <div className="w-[155px] shrink-0 tracking-[-0.75px]">Diapositiva 1 de 1 (Disposición)</div>
    <SSep />
    <div className="ml-2 w-[222px] shrink-0 tracking-[-0.9px]">Editar texto: párrafo 1, línea 1, columna 1</div>
    <SSep />
    <div className="ml-2 w-[110px] shrink-0 tracking-[-0.68px]">master-page3</div>
    <SSep />
    <svg width="16" height="16" viewBox="0 0 16 16" className="ml-[10px] shrink-0">
      <path d="M4 1v7M.5 4.500h7" stroke="#d85c00" strokeWidth="1.300" /><path d="M8 6h6v5H5V8" stroke="#6a6a6a" fill="none" strokeDasharray="1.200 1" />
    </svg>
    <div className="ml-1 w-[92px] shrink-0 tracking-[-0.5px]">1,48 / 11,02</div>
    <SSep />
    <svg width="16" height="16" viewBox="0 0 16 16" className="ml-[8px] shrink-0">
      <path d="M5 1v3M13 1v3M5 2.500h8M1 7h3M1 13h3M2.500 7v6" stroke="#d85c00" strokeWidth="1.200" /><path d="M6 6h7v6H6z" stroke="#6a6a6a" fill="none" strokeDasharray="1.200 1" />
    </svg>
    <div className="ml-[5px] w-[97px] shrink-0 tracking-[-0.6px]">1,47 x 0,29</div>
    <SSep />
    <svg width="12" height="12" viewBox="0 0 12 12" className="ml-[5px] shrink-0">
      <rect width="12" height="10" y="1" fill="#e2e2e2" /><path d="M6 2v7M3.500 6L6 8.500 8.500 6" stroke="#666" strokeWidth="1.500" fill="none" />
    </svg>
    <SSep className="ml-[4px]" />
    <SSep className="ml-[28px]" />
    <svg width="16" height="16" viewBox="0 0 16 16" className="ml-[5px] shrink-0">
      <rect x="1" y="1" width="12" height="12" rx="1" fill="#e4e4e4" /><path d="M3 3h3v3H3zM8.500 3h3v3h-3zM3 8h3v3H3z" stroke="#888" fill="none" /><path d="M8.500 8.500v6L5 11.500zM10 8.500v6l3.500-3z" fill="#f07a14" />
    </svg>
    <SSep className="ml-[3px]" />
    <svg width="130" height="16" viewBox="0 0 130 16" className="ml-[4px] shrink-0">
      <path d="M1 8h9M117 8h10M122 3.500v9" stroke="#999" />
      <path d="M16 8.500h97" stroke="#858585" strokeWidth="1.600" /><path d="M22.500 5.500v5M63 5.500v5" stroke="#8a8a8a" strokeWidth="1.300" />
      <circle cx="51" cy="8" r="5" fill="#f4f4f4" />
    </svg>
    <SSep className="ml-[5px]" />
    <div className="ml-[6px] tracking-[-0.6px]">75 %</div>
  </div>
);

export default function App() {
  return (
    <div className="flex h-[740px] w-[1021px] flex-col overflow-hidden bg-[#353535] [font-family:Inter,'Liberation_Sans',sans-serif] leading-normal">
      <Defs />
      <TitleBar />
      <MenuBar />
      <ToolBar />
      <div className="flex h-[617px] shrink-0">
        <LeftTools />
        <PagesPanel />
        <DocArea />
        <div className="flex flex-1 flex-col border-y-2 border-[#757575]">
          <div className="flex min-h-0 flex-1">
            <Splitter side="right" arrow="M0 0v8l5-4z" />
            <div className="w-[2px] shrink-0" />
            <Sidebar />
            <DeckTabs />
          </div>
        </div>
      </div>
      <StatusBar />
    </div>
  );
}
